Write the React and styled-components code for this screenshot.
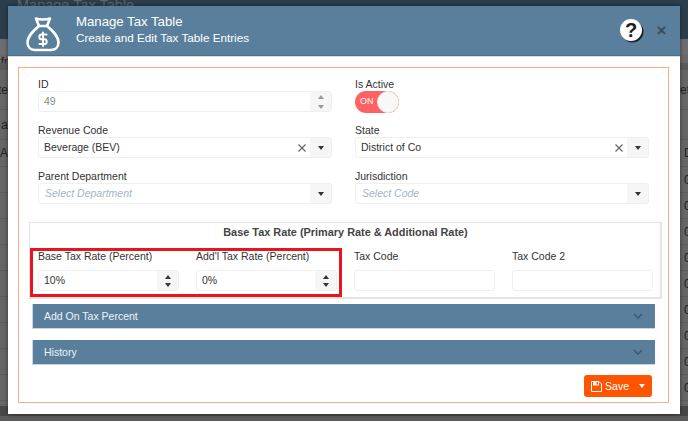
import React from "react";
import styled, { createGlobalStyle } from "styled-components";

const Global = createGlobalStyle`
  * { box-sizing: border-box; }
  html, body { margin: 0; padding: 0; width: 688px; height: 421px; overflow: hidden; background: #666; }
  body { font-family: "Liberation Sans", Arial, sans-serif; }
`;

const Page = styled.div`
  position: relative; width: 688px; height: 421px; overflow: hidden;
  display: flex; flex-direction: column; background: #666;
`;
const TopBar = styled.div`
  height: 39px; background: #2b3e4d; padding-left: 17px; color: #5a6672; font-size: 14.5px; line-height: 11px;
`;
const BackRow = styled.div`
  height: ${p => p.$h}px; background: ${p => p.$bg || "#666"};
  border-bottom: ${p => p.$line ? "1px solid #5c5c5c" : "none"};
  display: grid; grid-template-columns: 8px 1fr 4px; align-items: center;
  font-size: 12px; color: #222;
`;
const BackLeft = styled.span`display: flex; justify-content: flex-end; white-space: nowrap;`;
const BackRight = styled.span`grid-column: 3; white-space: nowrap; margin-left: ${p => p.$shift || 0}px;`;

const Modal = styled.div`
  position: absolute; left: 8px; top: 6px; width: 672px; height: 408px;
  background: #fff; box-shadow: 0 0 4px rgba(0,0,0,.5);
  display: flex; flex-direction: column;
`;
const Header = styled.header`
  height: 50px; background: #5a7f9c; border-bottom: 1px solid #4b6e8a;
  box-shadow: 0 1px 0 #ddd;
  display: flex; align-items: center; padding: 0 12px 0 17px; color: #fff; flex: none;
`;
const BagIcon = styled.svg`width: 36px; height: 36px; flex: none; margin-top: 7px;`;
const Titles = styled.div`margin-left: 15px; flex: 1; margin-top: -4px;`;
const Title = styled.div`font-size: 13.2px; line-height: 17px;`;
const Subtitle = styled.div`font-size: 11.7px; line-height: 15px;`;
const Help = styled.span`
  width: 22px; height: 22px; border-radius: 50%; background: #fff; color: #1c1c1c;
  box-shadow: 1.5px 1.5px 0 #222; font-size: 20px; font-weight: bold; line-height: 22px; text-align: center;
  margin-right: 13px; margin-top: -2px;
`;
const Close = styled.span`color: #3d4b57; font-size: 17px; font-weight: bold; width: 13px; line-height: 16px; text-align: center;`;

const Panel = styled.div`
  margin: 11px 11px 0 10px; height: 336px; border: 1px solid #ffac8a;
  padding: 9px 19px 0 19px; display: flex; flex-direction: column;
`;
const FormGrid = styled.div`
  display: grid; grid-template-columns: 294px 294px; column-gap: 23px; row-gap: 10px;
`;
const Field = styled.div`
  display: flex; flex-direction: column; margin-top: ${p => p.$push || 0}px;
`;
const Label = styled.label`font-size: 10.5px; line-height: 14px; color: #333; height: 14px;`;
const Control = styled.div`
  height: 21px; border: 1px solid #efefef; border-radius: 3px; background: #fff;
  display: flex; align-items: stretch; overflow: hidden; font-size: 10.5px; color: ${p => p.$muted ? "#888" : "#333"};
`;
const Value = styled.span`
  flex: 1; padding-left: 5px; line-height: 18px;
  ${p => p.$placeholder && "font-style: italic; color: #a3b5c6; padding-left: 6px;"}
`;
const ClearIcon = styled.svg`width: 8px; height: 8px; align-self: center; margin-right: 4px; flex: none;`;
const Addon = styled.span`
  width: 21px; background: #f6f6f6; display: flex; flex-direction: column; align-items: center; justify-content: center; gap: ${p => p.$gap ?? 4}px; flex: none;
`;
const Tri = styled.i`
  display: block; width: 0; height: 0;
  border-left: ${p => p.$s || 3}px solid transparent; border-right: ${p => p.$s || 3}px solid transparent;
  ${p => p.$up ? `border-bottom: 4px solid ${p.$c || "#333"};` : `border-top: 4px solid ${p.$c || "#333"};`}
`;
const Toggle = styled.div`
  width: 44px; height: 22px; border-radius: 11px; background: #ff6262; position: relative;
  color: #fff; font-size: 9px; line-height: 21px; padding-left: 5px;
`;
const Knob = styled.span`
  position: absolute; right: 0; top: 0; width: 22px; height: 22px; border-radius: 50%; background: #f8f8f8; border: 1px solid #eee;
`;

const Section = styled.section`
  position: relative; margin: 18px -13px 0 -9px; height: 77px; border: 1px solid #e4e4e4; border-width: 1px 2px 2px 1px;
  padding: 0 7px 0 8px;
`;
const SectionTitle = styled.h4`
  margin: 0; height: 26px; font-size: 10.9px; line-height: 18px; font-weight: bold; text-align: center; color: #444;
`;
const SectionGrid = styled.div`display: grid; grid-template-columns: repeat(4, 141px); column-gap: 17px;`;
const SectionField = styled(Field)`gap: 7px;`;
const Highlight = styled.div`
  position: absolute; left: 0; top: 25px; width: 312px; height: 49px; border: 3px solid #e8141e; pointer-events: none;
`;
const Accordion = styled.div`
  margin: ${p => p.$first ? 5 : 11}px -6px 0 -6px; height: 25px; background: #5a7f9c; border: 1px solid #c9d6e0;
  border-width: 0 0 1px 1px; color: #eef3f7; font-size: 10.5px; padding: 0 11px 1px 11px;
  display: flex; justify-content: space-between; align-items: center; flex: none;
`;
const Chevron = styled.svg`width: 12px; height: 12px; margin-top: 1px;`;
const Footer = styled.div`display: flex; justify-content: flex-end; margin: 10px -3px 0 0;`;
const SaveButton = styled.button`
  width: 68px; height: 22px; border: 0; border-radius: 3px; background: #ff5500; color: #fff; padding: 0 0 0 7px;
  display: flex; align-items: center; font: 10.6px "Liberation Sans", Arial, sans-serif;
`;
const SaveIcon = styled.svg`width: 11px; height: 11px; margin-right: 3px; flex: none;`;
const SaveCaret = styled.span`margin-left: auto; margin-right: 7px;`;

const Spinner = ({ c, s, gap }) => (
  <Addon $gap={gap}><Tri $up $c={c} $s={s} /><Tri $c={c} $s={s} /></Addon>
);
const Caret = () => <Addon><Tri /></Addon>;
const Clear = () => (
  <ClearIcon viewBox="0 0 8 8" fill="none" stroke="#666" strokeWidth="1.2"><path d="M.5 .5 L7.5 7.5 M7.5 .5 L.5 7.5" /></ClearIcon>
);

const backRows = [
  { h: 16, bg: "#6d6d6d" },
  { h: 8, l: "fr", bg: "#6a6a6a" },
  { h: 7, bg: "#5a5a5a" },
  { h: 40, l: "te", r: "et", line: true },
  { h: 30, l: "a", line: true },
  { h: 27, l: "A", r: "D", line: true, rs: 1 },
  ...Array.from({ length: 9 }, () => ({ h: 26, r: "0", line: true, rs: 1 })),
  { h: 5 },
  { h: 10, bg: "#484848" },
  { h: 5, bg: "#5c5c5c" },
];

export default function App() {
  return (
    <>
      <Global />
      <Page>
        <TopBar>Manage Tax Table</TopBar>
        {backRows.map((r, i) => (
          <BackRow key={i} $h={r.h} $bg={r.bg} $line={r.line}>
            <BackLeft>{r.l}</BackLeft>
            <BackRight $shift={r.rs ? 0 : -4}>{r.r}</BackRight>
          </BackRow>
        ))}
        <Modal>
          <Header>
            <BagIcon viewBox="0 0 36 36" fill="none" stroke="#fff" strokeWidth="2.6" strokeLinejoin="round" strokeLinecap="round">
              <path d="M11 2.5 C14 3.8 22 3.8 25 2.5 L22 10 H14 Z" />
              <path d="M14 10 C8 15 2.5 20 2.5 26.5 C2.5 31.5 6 34 10 34 H26 C30 34 33.5 31.5 33.5 26.5 C33.5 20 28 15 22 10" />
              <path d="M21.5 18.5 H16.7 a2.4 2.4 0 0 0 0 4.8 h2.6 a2.4 2.4 0 0 1 0 4.8 H14.5 M18 16.5 v13.5" strokeWidth="2" />
            </BagIcon>
            <Titles>
              <Title>Manage Tax Table</Title>
              <Subtitle>Create and Edit Tax Table Entries</Subtitle>
            </Titles>
            <Help>?</Help>
            <Close>×</Close>
          </Header>
          <Panel>
            <FormGrid>
              <Field>
                <Label>ID</Label>
                <Control $muted><Value>49</Value><Spinner c="#999" gap={6} /></Control>
              </Field>
              <Field>
                <Label>Is Active</Label>
                <Toggle>ON<Knob /></Toggle>
              </Field>
              <Field>
                <Label>Revenue Code</Label>
                <Control><Value>Beverage (BEV)</Value><Clear /><Caret /></Control>
              </Field>
              <Field>
                <Label>State</Label>
                <Control><Value>District of Co</Value><Clear /><Caret /></Control>
              </Field>
              <Field $push={1}>
                <Label>Parent Department</Label>
                <Control><Value $placeholder>Select Department</Value><Caret /></Control>
              </Field>
              <Field $push={1}>
                <Label>Jurisdiction</Label>
                <Control><Value $placeholder>Select Code</Value><Caret /></Control>
              </Field>
            </FormGrid>
            <Section>
              <SectionTitle>Base Tax Rate (Primary Rate &amp; Additional Rate)</SectionTitle>
              <SectionGrid>
                <SectionField>
                  <Label>Base Tax Rate (Percent)</Label>
                  <Control><Value>10%</Value><Spinner /></Control>
                </SectionField>
                <SectionField>
                  <Label>Add'l Tax Rate (Percent)</Label>
                  <Control><Value>0%</Value><Spinner /></Control>
                </SectionField>
                <SectionField>
                  <Label>Tax Code</Label>
                  <Control />
                </SectionField>
                <SectionField>
                  <Label>Tax Code 2</Label>
                  <Control />
                </SectionField>
              </SectionGrid>
              <Highlight />
            </Section>
            {["Add On Tax Percent", "History"].map((t, i) => (
              <Accordion key={t} $first={i === 0}>
                {t}
                <Chevron viewBox="0 0 12 12" fill="none" stroke="#3f5669" strokeWidth="1.3"><path d="M2 4 L6 8 L10 4" /></Chevron>
              </Accordion>
            ))}
            <Footer>
              <SaveButton>
                <SaveIcon viewBox="0 0 11 11" fill="none" stroke="#fff" strokeWidth="1">
                  <path d="M.5 .5 H8 L10.5 3 V10.5 H.5 Z" />
                  <path d="M2 .5 V4.5 H8 V.5 Z" fill="#fff" stroke="none" />
                  <path d="M5.5 1 H7 V3.5 H5.5 Z" fill="#ff5500" stroke="none" />
                </SaveIcon>
                Save
                <SaveCaret><Tri $c="#fff" /></SaveCaret>
              </SaveButton>
            </Footer>
          </Panel>
        </Modal>
      </Page>
    </>
  );
}
